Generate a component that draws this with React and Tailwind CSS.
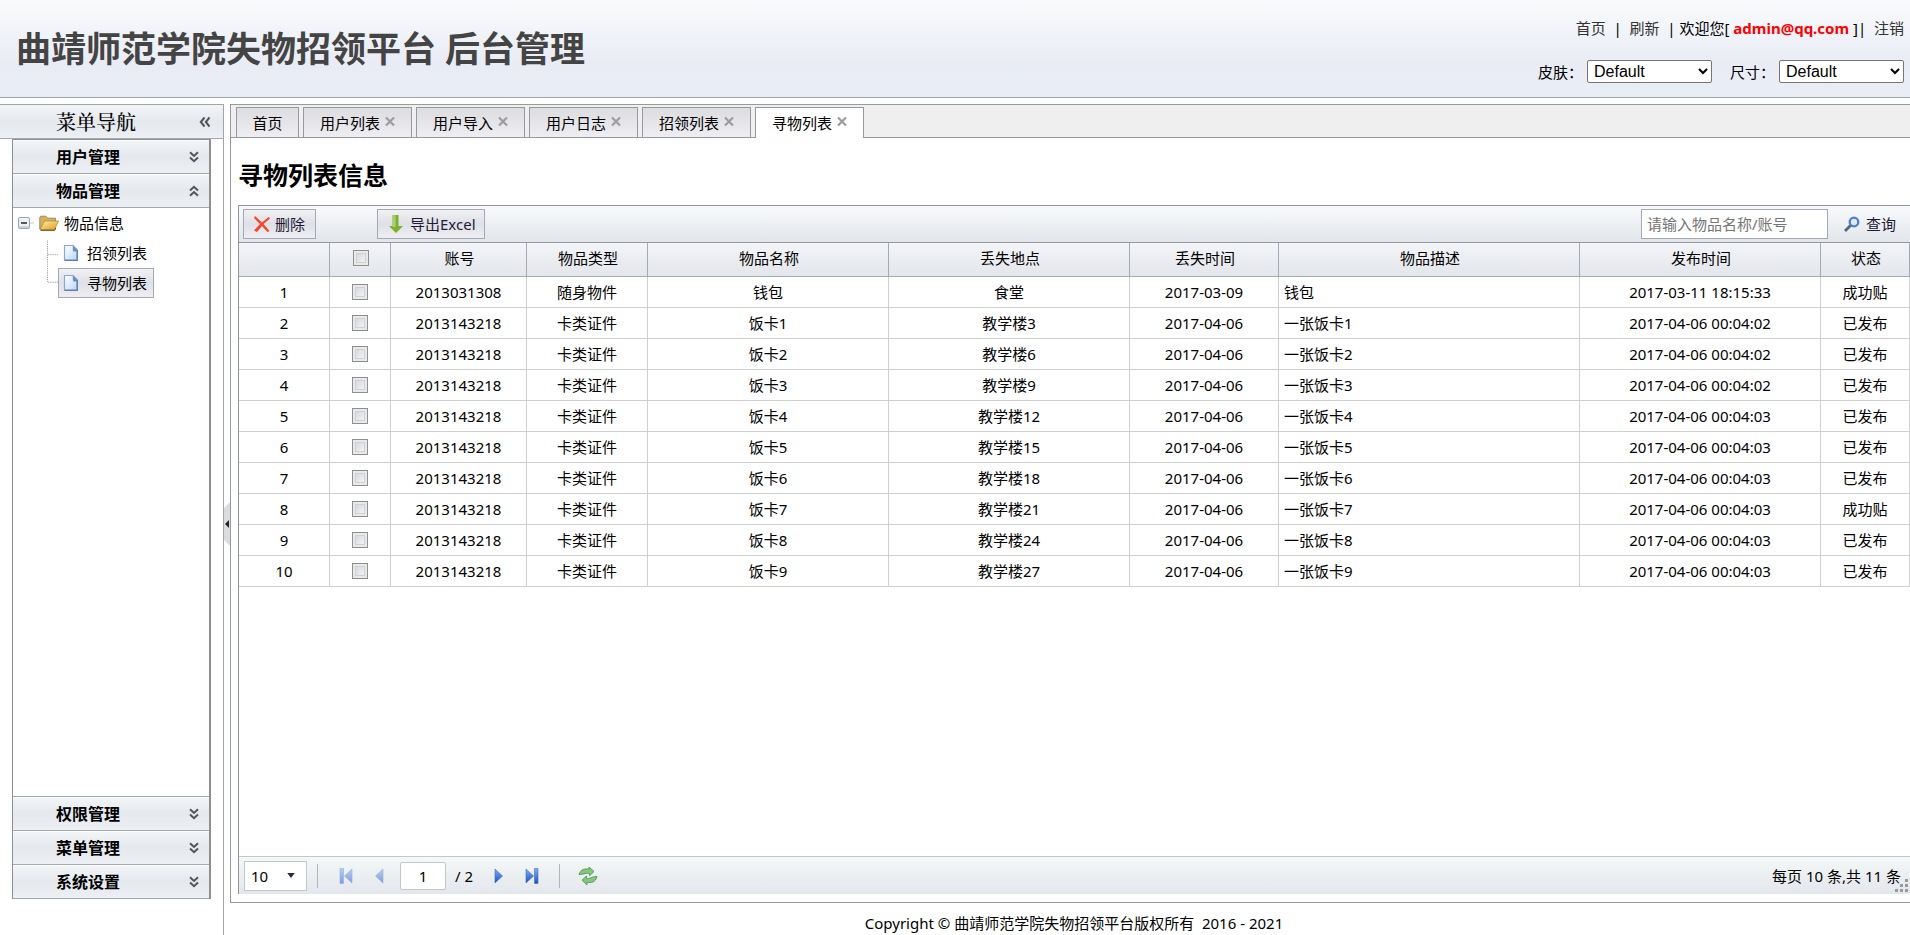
const cell = 'h-[31px] border-r border-b border-[#d0d0d0] p-0';
const head = 'h-[34px] border-r border-b border-[#a3a9b6] p-0 pb-1 pl-[2px] font-normal';

const rows = [
  ['2013031308', '随身物件', '钱包', '食堂', '2017-03-09', '钱包', '2017-03-11 18:15:33', '成功贴'],
  ['2013143218', '卡类证件', '饭卡1', '教学楼3', '2017-04-06', '一张饭卡1', '2017-04-06 00:04:02', '已发布'],
  ['2013143218', '卡类证件', '饭卡2', '教学楼6', '2017-04-06', '一张饭卡2', '2017-04-06 00:04:02', '已发布'],
  ['2013143218', '卡类证件', '饭卡3', '教学楼9', '2017-04-06', '一张饭卡3', '2017-04-06 00:04:02', '已发布'],
  ['2013143218', '卡类证件', '饭卡4', '教学楼12', '2017-04-06', '一张饭卡4', '2017-04-06 00:04:03', '已发布'],
  ['2013143218', '卡类证件', '饭卡5', '教学楼15', '2017-04-06', '一张饭卡5', '2017-04-06 00:04:03', '已发布'],
  ['2013143218', '卡类证件', '饭卡6', '教学楼18', '2017-04-06', '一张饭卡6', '2017-04-06 00:04:03', '已发布'],
  ['2013143218', '卡类证件', '饭卡7', '教学楼21', '2017-04-06', '一张饭卡7', '2017-04-06 00:04:03', '成功贴'],
  ['2013143218', '卡类证件', '饭卡8', '教学楼24', '2017-04-06', '一张饭卡8', '2017-04-06 00:04:03', '已发布'],
  ['2013143218', '卡类证件', '饭卡9', '教学楼27', '2017-04-06', '一张饭卡9', '2017-04-06 00:04:03', '已发布'],
];
const headers = ['账号', '物品类型', '物品名称', '丢失地点', '丢失时间', '物品描述', '发布时间', '状态'];
const tabs = ['用户列表', '用户导入', '用户日志', '招领列表', '寻物列表'];

function Check({ label }) {
  return (
    <input
      type="checkbox"
      aria-label={label}
      className="mx-auto block size-4 appearance-none border border-[#8e8f8f] bg-linear-to-br from-[#cbcfd6] to-[#fdfdfd] shadow-[inset_0_0_0_2px_#e9e9e9,inset_0_0_0_3px_#cdd0d5]"
    />
  );
}

function Chevrons({ up }) {
  return (
    <svg viewBox="0 0 10 12" className="h-3 w-[10px]" fill="none" stroke="#555" strokeWidth="2">
      {up ? <path d="M1 5.5 5 1.8 9 5.5M1 10.7 5 7 9 10.7" /> : <path d="M1 1.3 5 5 9 1.3M1 6.5 5 10.2 9 6.5" />}
    </svg>
  );
}

function Section({ title, up }) {
  return (
    <button className="flex h-[34px] w-full shrink-0 items-center justify-between border-b border-[#a3a9ae] bg-linear-to-b from-[#f2f6f8] via-[#e5e8ed] to-[#eceff3] pl-[43px] pr-[10px] text-[16px] font-bold shadow-[inset_0_1px_0_#fff]">
      {title}
      <Chevrons up={up} />
    </button>
  );
}

function Leaf({ label, active }) {
  return (
    <a
      href="#"
      className={
        active
          ? 'flex h-[30px] w-24 items-center gap-2 border border-[#a3a9b6] bg-linear-to-b from-[#f1f1f4] via-[#dfe0e6] to-[#eeeef2] pl-1'
          : 'flex h-[30px] w-24 items-center gap-2 border border-transparent pl-1'
      }
    >
      <svg viewBox="0 0 16 18" className="h-[18px] w-4 shrink-0">
        <defs>
          <linearGradient id="page" x1="0" y1="0" x2="1" y2="1">
            <stop offset="0" stopColor="#ffffff" />
            <stop offset="0.4" stopColor="#e6f0ff" />
            <stop offset="1" stopColor="#b9d4fb" />
          </linearGradient>
        </defs>
        <path d="M1.500 1.500h8.500l4 4v10.500h-12.500z" fill="url(#page)" stroke="#8ba6cf" strokeWidth="1.200" />
        <path d="M9.800 1.300l4.700 4.700v1.500h-3.200q-1.500 0-1.500-1.500z" fill="#6a8ec6" />
        <path d="M14.300 6v10.400h-12.800" fill="none" stroke="#5c7fb6" strokeWidth="1.300" />
      </svg>
      <span className="whitespace-nowrap">{label}</span>
    </a>
  );
}

function Pager({ last, dim, flip }) {
  return (
    <svg viewBox="0 0 14 20" className={flip ? 'h-5 w-[14px] -scale-x-100' : 'h-5 w-[14px]'}>
      <defs>
        <linearGradient id="pg" x1="0" y1="0" x2="0" y2="1">
          <stop offset="0" stopColor="#7fb0f6" />
          <stop offset="1" stopColor="#1c50c4" />
        </linearGradient>
      </defs>
      <g opacity={dim ? 0.5 : 1} fill="url(#pg)" stroke="#3a6cc8" strokeWidth="0.6">
        <path d={last ? 'M1 3 8.500 10 1 17z' : 'M3 3 10.500 10 3 17z'} />
        {last && <path d="M9.500 2.500h3.500v15h-3.500z" />}
      </g>
    </svg>
  );
}

export default function App() {
  return (
    <div className="flex min-h-screen flex-col bg-white font-['Noto_Sans','Noto_Sans_CJK_SC',sans-serif] text-[15px] leading-5 text-black">
      <header className="flex h-[98px] shrink-0 justify-between border-b border-[#a0a5a9] bg-linear-to-b from-[#f9fbfc] via-[#e9ecf5] via-65% to-[#e9edf5] pl-4 pr-[6px]">
        <h1 className="pt-[25px] text-[35px] leading-12 font-bold text-[#444]">曲靖师范学院失物招领平台 后台管理</h1>
        <div className="flex flex-col items-end pt-[18px]">
          <nav className="flex whitespace-pre">
            <a href="#" className="text-[#333]">首页</a>
            <span>{'  |  '}</span>
            <a href="#" className="text-[#333]">刷新</a>
            <span>{'  | 欢迎您[ '}</span>
            <b className="text-[#f00]">admin@qq.com</b>
            <span>{' ]|  '}</span>
            <a href="#" className="text-[#333]">注销</a>
          </nav>
          <div className="mt-[22px] flex items-center">
            <label htmlFor="skin" className="mr-1">皮肤：</label>
            <select id="skin" className="mr-[18px] h-[23px] w-[125px] rounded-[2px] border border-[#767676] bg-white pl-[2px] font-['Liberation_Sans',sans-serif] text-[16px]">
              <option>Default</option>
            </select>
            <label htmlFor="size" className="mr-1">尺寸：</label>
            <select id="size" className="h-[23px] w-[125px] rounded-[2px] border border-[#767676] bg-white pl-[2px] font-['Liberation_Sans',sans-serif] text-[16px]">
              <option>Default</option>
            </select>
          </div>
        </div>
      </header>

      <div className="flex min-h-0 flex-1 pt-[6px]">
        <aside className="flex w-[224px] shrink-0 flex-col border-t border-r border-[#a0a5a9] pb-9">
          <div className="flex h-[34px] shrink-0 items-center justify-between border-b border-[#a3a9b6] bg-linear-to-b from-[#f2f6f8] via-[#e5e8ed] to-[#eceff3] pl-14 pr-3">
            <h2 className="font-['Noto_Serif_CJK_SC','Noto_Sans_CJK_SC',serif] text-[20px] font-medium">菜单导航</h2>
            <button aria-label="收起菜单">
              <svg viewBox="0 0 12 12" className="size-3" fill="none" stroke="#555" strokeWidth="2">
                <path d="M5.500 1.500 1.800 6l3.700 4.500M10.500 1.500 6.800 6l3.700 4.500" />
              </svg>
            </button>
          </div>
          <div className="mx-3 flex flex-1 flex-col border border-r-2 border-[#8f8f8f]">
            <Section title="用户管理" />
            <Section title="物品管理" up />
            <div className="flex-1">
              <div className="flex h-[30px] items-center pl-[5px]">
                <svg viewBox="0 0 16 12" className="h-3 w-4 shrink-0">
                  <rect x="0.500" y="0.500" width="11" height="11" rx="1.500" fill="#eef1f5" stroke="#9aa5ad" />
                  <path d="M1 9h10v2H1z" fill="#cbd2d8" />
                  <path d="M3 6h6" stroke="#333" strokeWidth="1.600" />
                  <path d="M12.500 6h3" stroke="#888" strokeDasharray="1 1" />
                </svg>
                <svg viewBox="0 0 20 18" className="ml-[5px] mr-[5px] h-[18px] w-5 shrink-0">
                  <defs>
                    <linearGradient id="folder" x1="0" y1="0" x2="1" y2="1">
                      <stop offset="0" stopColor="#fff0a8" />
                      <stop offset="1" stopColor="#dd9d1e" />
                    </linearGradient>
                  </defs>
                  <path d="M0.800 15V3.500l1-1.300h5l2 2h7.700v4H6z" fill="#d8b05a" stroke="#8f8361" strokeWidth="0.900" />
                  <path d="M5.500 7h14L15.500 15.500H1z" fill="url(#folder)" stroke="#b98a2a" strokeWidth="0.800" />
                  <path d="M1.500 16.300h14.200l1-2.300" stroke="#5a4312" fill="none" />
                </svg>
                <span>物品信息</span>
              </div>
              <div className="flex">
                <svg viewBox="0 0 12 60" className="ml-[34px] h-[60px] w-[11px]" fill="none" stroke="#888" strokeDasharray="1 1">
                  <path d="M0.500 0v45M1 15.500h11M1 45.500h11" />
                </svg>
                <div>
                  <Leaf label="招领列表" />
                  <Leaf label="寻物列表" active />
                </div>
              </div>
            </div>
            <div className="-mb-px flex flex-col border-t border-[#a3a9ae]">
              <Section title="权限管理" />
              <Section title="菜单管理" />
              <Section title="系统设置" />
            </div>
          </div>
        </aside>

        <div className="flex w-[6px] shrink-0 items-center pt-2">
          <svg viewBox="0 0 6 44" className="h-11 w-[6px]">
            <path d="M6 0 0 6v32l6 6z" fill="#dcdcdc" />
            <path d="M5 18v8L1 22z" fill="#222" />
          </svg>
        </div>

        <main className="flex min-w-0 flex-1 flex-col">
          <div className="flex flex-1 flex-col border border-r-0 border-[#96999e]">
            <div className="flex h-[33px] shrink-0 items-end gap-1 border-b border-[#96999e] bg-[#efefef] pl-[5px]">
              <button className="h-[30px] w-[63px] border border-b-0 border-[#96999e] bg-linear-to-b from-[#dcdce1] to-[#eeeef2]">首页</button>
              {tabs.map((t, i) => (
                <button
                  key={t}
                  className={
                    i === 4
                      ? 'relative -mb-px flex h-[31px] w-[109px] justify-center gap-[5px] border border-b-0 border-[#96999e] bg-white pt-[5px]'
                      : 'flex h-[30px] w-[109px] justify-center gap-[5px] border border-b-0 border-[#96999e] bg-linear-to-b from-[#dcdce1] to-[#eeeef2] pt-[5px]'
                  }
                >
                  {t}
                  <svg viewBox="0 0 10 11" className="mt-[3px] h-[11px] w-[10px]" stroke="#9b9ba2" strokeWidth="2.200">
                    <path d="M1 1.500l8 8M9 1.500l-8 8" />
                  </svg>
                </button>
              ))}
            </div>

            <div className="flex flex-1 flex-col pb-2 pl-[7px]">
              <h2 className="pt-[22px] pb-[15px] text-[25px] leading-[30px] font-bold">寻物列表信息</h2>
              <div className="flex flex-1 flex-col border-t border-l border-[#8d959e]">
                <div className="flex h-[37px] shrink-0 items-center border-b border-[#96999e] bg-linear-to-b from-[#f8fafc] to-[#e2e5ea] pl-1 pr-[14px]">
                  <button className="flex h-[30px] w-[73px] items-center gap-1 border border-[#a3a9b6] bg-linear-to-b from-[#f1f1f4] via-[#dfe0e6] to-[#eeeef2] pl-[9px] text-[#1d1936]">
                    <svg viewBox="0 0 18 18" className="size-[18px] shrink-0">
                      <path d="M2 1 9 7.500 15.500 2l1.500 1.500L10.500 9l6 7-2 1L9 11l-5 6-3-1.500L7 9 1 3z" fill="#f5452b" />
                    </svg>
                    <span className="whitespace-nowrap">删除</span>
                  </button>
                  <button className="ml-[61px] flex h-[30px] w-[108px] items-center gap-[5px] border border-[#a3a9b6] bg-linear-to-b from-[#f1f1f4] via-[#dfe0e6] to-[#eeeef2] pl-[9px] text-[#1d1936]">
                    <svg viewBox="0 0 18 20" className="h-5 w-[18px] shrink-0">
                      <path d="M5.500 1h6v11h4.500L9 19 2 12h3.500z" fill="#7cb032" />
                      <path d="M6.500 1h2v12h-3z" fill="#a9d468" />
                    </svg>
                    <span className="whitespace-nowrap">导出Excel</span>
                  </button>
                  <input
                    aria-label="查询条件"
                    placeholder="请输入物品名称/账号"
                    className="ml-auto h-[30px] w-[187px] border border-[#a3a9b6] bg-white px-[5px] placeholder:text-[#757575]"
                  />
                  <button className="ml-4 flex items-center gap-[6px] text-[#1d1936]">
                    <svg viewBox="0 0 16 16" className="size-4">
                      <path d="M1 15 7 9" stroke="#55657c" strokeWidth="2.800" />
                      <circle cx="10" cy="6" r="4.300" fill="#dbeaff" stroke="#4a80c8" strokeWidth="2.300" />
                    </svg>
                    查询
                  </button>
                </div>

                <table className="w-full table-fixed border-separate border-spacing-0 text-center">
                  <colgroup>
                    <col className="w-[91px]" />
                    <col className="w-[61px]" />
                    <col className="w-[136px]" />
                    <col className="w-[121px]" />
                    <col className="w-[241px]" />
                    <col className="w-[241px]" />
                    <col className="w-[149px]" />
                    <col className="w-[301px]" />
                    <col className="w-[241px]" />
                    <col />
                  </colgroup>
                  <thead className="bg-linear-to-b from-[#f3f5f8] to-[#e2e5ea]">
                    <tr>
                      <th className={head} />
                      <th className={head}><Check label="全选" /></th>
                      {headers.map((h) => <th key={h} className={head}>{h}</th>)}
                    </tr>
                  </thead>
                  <tbody>
                    {rows.map((r, i) => (
                      <tr key={i}>
                        <td className={cell}>{i + 1}</td>
                        <td className={cell}><Check label={`选择第${i + 1}行`} /></td>
                        {r.map((v, j) => (
                          <td key={j} className={j === 5 ? 'h-[31px] border-r border-b border-[#d0d0d0] p-0 pl-[5px] text-left' : cell}>{v}</td>
                        ))}
                      </tr>
                    ))}
                  </tbody>
                </table>

                <div className="relative mt-auto flex h-[38px] shrink-0 items-center border-t border-[#c4c9c6] bg-linear-to-b from-[#f4f8f8] to-[#e3e6eb] pl-[5px] pr-[9px]">
                  <select aria-label="每页条数" className="h-[30px] w-[63px] appearance-none border border-[#c4c7c9] bg-white pl-[6px]">
                    <option>10</option>
                  </select>
                  <svg viewBox="0 0 9 6" className="pointer-events-none -ml-5 h-[5px] w-2"><path d="M0 0h9L4.500 6z" fill="#2b2540" /></svg>
                  <span className="ml-[22px] h-6 w-px bg-[#b0b5ba]" />
                  <button aria-label="第一页" className="ml-[21px]"><Pager last dim flip /></button>
                  <button aria-label="上一页" className="ml-[19px]"><Pager dim flip /></button>
                  <input aria-label="页码" defaultValue="1" className="ml-[14px] h-7 w-[46px] rounded-[2px] border border-[#c4c7c9] bg-white text-center" />
                  <span className="ml-[9px] w-[22px] whitespace-nowrap">/ 2</span>
                  <button aria-label="下一页" className="ml-[15px]"><Pager /></button>
                  <button aria-label="最后一页" className="ml-[19px]"><Pager last /></button>
                  <span className="ml-5 h-6 w-px bg-[#b0b5ba]" />
                  <button aria-label="刷新" className="ml-[18px]">
                    <svg viewBox="0 0 20 20" className="size-5" fill="#86c582" stroke="#4e9a50" strokeWidth="0.900">
                      <path d="M1 8.500C2.500 3 7 2.500 11 3.200V1l5 4.500-4.500 4.200V7.500C8 6.500 6.500 8.500 1 8.500z" />
                      <path d="M19 10.500c-1.500 6-6 6.500-10 5.800V19l-5-4.800L8.500 10v2.300c3.500 1 5-1.800 10.500-1.800z" />
                    </svg>
                  </button>
                  <span className="ml-auto">每页 10 条,共 11 条</span>
                  <svg viewBox="0 0 13 13" className="absolute right-[2px] bottom-[2px] size-[13px]" fill="#999">
                    <path d="M10 0h3v3h-3zM5 5h3v3H5zM10 5h3v3h-3zM0 10h3v3H0zM5 10h3v3H5zM10 10h3v3h-3z" />
                  </svg>
                </div>
              </div>
            </div>
          </div>
          <footer className="h-8 shrink-0 whitespace-pre pl-2 pt-[10px] text-center">Copyright © 曲靖师范学院失物招领平台版权所有  2016 - 2021</footer>
        </main>
      </div>
    </div>
  );
}
